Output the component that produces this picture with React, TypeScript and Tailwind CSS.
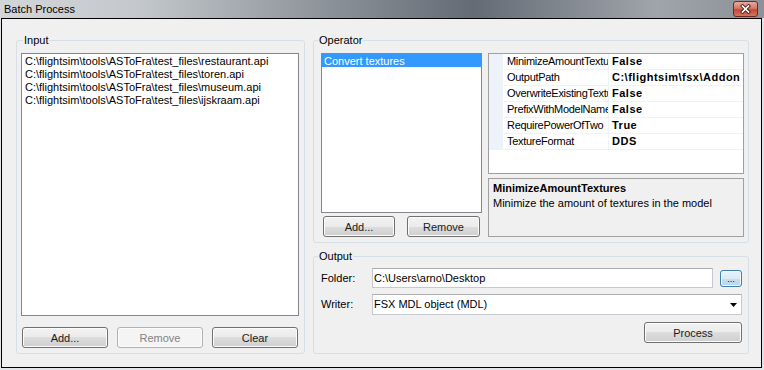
import React from 'react'

const inputFiles = [
  'C:\\flightsim\\tools\\ASToFra\\test_files\\restaurant.api',
  'C:\\flightsim\\tools\\ASToFra\\test_files\\toren.api',
  'C:\\flightsim\\tools\\ASToFra\\test_files\\museum.api',
  'C:\\flightsim\\tools\\ASToFra\\test_files\\ijskraam.api',
]

const props = [
  ['MinimizeAmountTextures', 'False'],
  ['OutputPath', 'C:\\flightsim\\fsx\\Addon'],
  ['OverwriteExistingTextures', 'False'],
  ['PrefixWithModelName', 'False'],
  ['RequirePowerOfTwo', 'True'],
  ['TextureFormat', 'DDS'],
]

const Btn = ({
  children,
  className = '',
  disabled = false,
}: {
  children: React.ReactNode
  className?: string
  disabled?: boolean
}) => (
  <button
    disabled={disabled}
    className={`flex items-center justify-center rounded-[3px] border pt-px text-[11px] font-normal leading-[13px] shadow-[inset_0_0_0_1px_#fcfcfc] ${
      disabled
        ? 'border-[#adb2b5] bg-[#f4f4f4] text-[#838383]'
        : 'border-[#707070] bg-[linear-gradient(to_bottom,#f2f2f2_0%,#ebebeb_50%,#dddddd_50%,#cfcfcf_100%)] text-[#1a1a1a]'
    } ${className}`}
  >
    {children}
  </button>
)

const Group = ({
  label,
  labelClass,
  className,
  children,
}: {
  label: string
  labelClass: string
  className: string
  children: React.ReactNode
}) => (
  <div className={`relative rounded-[3px] border border-[#d5dfe5] ${className}`}>
    <span className={`absolute top-[-7px] bg-[#f0f0f0] px-px leading-[13px] ${labelClass}`}>
      {label}
    </span>
    {children}
  </div>
)

export default function App() {
  return (
    <div className="h-[370px] w-[764px] overflow-hidden bg-[#e2e4e7] font-['Liberation_Sans',Arial,sans-serif] text-[11px] text-black">
      {/* title bar */}
      <div className="flex h-[18px] items-center justify-between bg-[linear-gradient(to_right,#d3d6d9_0%,#c4c8cc_18%,#8e949b_42%,#646b75_62%,#a0a5ab_86%,#8c9197_100%)] pl-[4px] pr-[6px]">
        <span className="leading-[13px]">Batch Process</span>
        <div className="flex h-[16px] w-[25px] items-center justify-center rounded-[3px] border border-[#6b2a22] bg-[linear-gradient(to_bottom,#e9a99b_0%,#d47867_45%,#c24a36_55%,#d2765d_100%)]">
          <svg width="11" height="10" viewBox="0 0 11 10">
            <path d="M2.5 2 L8.5 8 M8.5 2 L2.5 8" stroke="#4a1a14" strokeWidth="3.4" strokeLinecap="square" />
            <path d="M2.5 2 L8.5 8 M8.5 2 L2.5 8" stroke="#ffffff" strokeWidth="1.7" strokeLinecap="square" />
          </svg>
        </div>
      </div>

      {/* window body */}
      <div className="ml-px flex h-[350px] w-[761px] gap-[8px] border border-black bg-[#f0f0f0] pb-[13px] pl-[14px] pr-[12px] pt-[21px]">
        {/* Input */}
        <Group label="Input" labelClass="left-[6px]" className="flex h-[314px] w-[289px] flex-col pb-[5px] pl-[4px] pr-[5px] pt-[12px]">
          <div className="h-[263px] border border-[#828790] bg-white">
            {inputFiles.map((f) => (
              <div key={f} className="h-[13px] whitespace-nowrap pl-[3px] leading-[15px]">
                {f}
              </div>
            ))}
          </div>
          <div className="mt-[11px] flex justify-between px-px">
            <Btn className="h-[21px] w-[86px]">Add...</Btn>
            <Btn className="h-[21px] w-[86px]" disabled>
              Remove
            </Btn>
            <Btn className="h-[21px] w-[86px]">Clear</Btn>
          </div>
        </Group>

        <div className="flex flex-col gap-[13px]">
          {/* Operator */}
          <Group label="Operator" labelClass="left-[4px]" className="flex h-[203px] w-[436px] gap-[6px] pb-[5px] pl-[7px] pr-[4px] pt-[12px]">
            <div className="flex w-[161px] flex-col">
              <div className="h-[160px] border border-[#828790] bg-white">
                <div className="h-[13px] bg-[#3399ff] pl-[2px] leading-[15px] text-white">Convert textures</div>
              </div>
              <div className="mt-[3px] flex justify-between px-[2px]">
                <Btn className="h-[21px] w-[72px]">Add...</Btn>
                <Btn className="h-[21px] w-[73px]">Remove</Btn>
              </div>
            </div>
            <div className="flex w-[256px] flex-col gap-[4px]">
              <div className="h-[121px] border border-[#a0a0a0] bg-white">
                {props.map(([name, value]) => (
                  <div key={name} className="flex h-[16px]">
                    <div className="w-[14px] bg-[#eef2f9]" />
                    <div className="w-[106px] overflow-hidden whitespace-nowrap border-b border-r border-[#eef2f9] pl-[4px] leading-[15px] tracking-[-0.3px]">
                      {name}
                    </div>
                    <div className="flex-1 overflow-hidden whitespace-nowrap border-b border-[#eef2f9] pl-[3px] font-bold leading-[15px] tracking-[0.5px]">
                      {value}
                    </div>
                  </div>
                ))}
              </div>
              <div className="h-[59px] border border-[#a0a0a0] bg-[#f0f0f0] pl-[4px] pt-[2px] leading-[15px]">
                <div className="font-bold">MinimizeAmountTextures</div>
                <div>Minimize the amount of textures in the model</div>
              </div>
            </div>
          </Group>

          {/* Output */}
          <Group label="Output" labelClass="left-[4px]" className="flex h-[98px] w-[436px] flex-col pb-[10px] pl-[7px] pr-[6px] pt-[11px]">
            <div className="flex h-[20px] items-center">
              <span className="w-[51px] leading-[13px]">Folder:</span>
              <div className="flex h-[20px] w-[341px] items-center border border-[#c6cad0] border-t-[#abadb3] bg-white pl-px leading-[13px]">
                C:\Users\arno\Desktop
              </div>
              <button className="ml-[7px] flex h-[17px] w-[22px] items-end justify-center rounded-[3px] border border-[#3c7fb1] bg-[linear-gradient(to_bottom,#e6f2fa_0%,#dbeaf5_50%,#c9deee_50%,#bcd6ea_100%)] pb-[2px] text-[9px] font-normal leading-[9px] shadow-[inset_0_0_0_1px_#f4fafd]">
                ...
              </button>
            </div>
            <div className="mt-[6px] flex h-[21px] items-center">
              <span className="w-[51px] leading-[13px]">Writer:</span>
              <div className="flex h-[21px] flex-1 items-center justify-between border border-[#c6cad0] border-t-[#abadb3] bg-white pl-px pr-[4px] leading-[13px]">
                <span>FSX MDL object (MDL)</span>
                <svg width="7" height="4" viewBox="0 0 7 4">
                  <path d="M0 0 H7 L3.5 4 Z" fill="#000" />
                </svg>
              </div>
            </div>
            <div className="mt-[7px] flex justify-end">
              <Btn className="h-[21px] w-[98px]">Process</Btn>
            </div>
          </Group>
        </div>
      </div>
    </div>
  )
}
